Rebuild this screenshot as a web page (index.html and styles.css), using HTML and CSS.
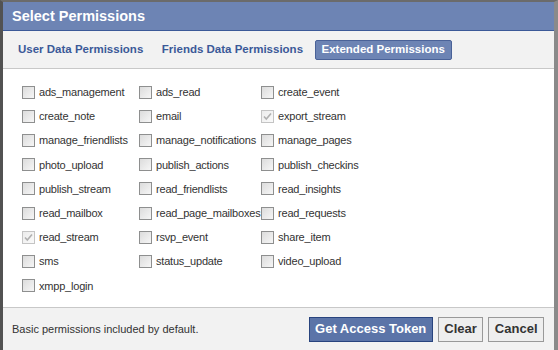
FILE: index.html
```html
<!DOCTYPE html>
<html>
<head>
<meta charset="utf-8">
<link rel="stylesheet" href="styles.css">
</head>
<body>
<div class="dialog">
  <div class="title">Select Permissions</div>
  <div class="tabs">
    <span class="tab">User Data Permissions</span>
    <span class="tab">Friends Data Permissions</span>
    <span class="tab active">Extended Permissions</span>
  </div>
  <div class="content">
    <div class="grid">
      <label class="item"><span class="cb"></span>ads_management</label>
      <label class="item"><span class="cb"></span>ads_read</label>
      <label class="item"><span class="cb"></span>create_event</label>
      <label class="item"><span class="cb"></span>create_note</label>
      <label class="item"><span class="cb"></span>email</label>
      <label class="item"><span class="cb checked"><svg viewBox="0 0 13 13" width="13" height="13"><path d="M3 6.5 L5.3 9 L10 3.5" fill="none" stroke="#b0b0b0" stroke-width="1.6"/></svg></span>export_stream</label>
      <label class="item"><span class="cb"></span>manage_friendlists</label>
      <label class="item"><span class="cb"></span>manage_notifications</label>
      <label class="item"><span class="cb"></span>manage_pages</label>
      <label class="item"><span class="cb"></span>photo_upload</label>
      <label class="item"><span class="cb"></span>publish_actions</label>
      <label class="item"><span class="cb"></span>publish_checkins</label>
      <label class="item"><span class="cb"></span>publish_stream</label>
      <label class="item"><span class="cb"></span>read_friendlists</label>
      <label class="item"><span class="cb"></span>read_insights</label>
      <label class="item"><span class="cb"></span>read_mailbox</label>
      <label class="item"><span class="cb"></span>read_page_mailboxes</label>
      <label class="item"><span class="cb"></span>read_requests</label>
      <label class="item"><span class="cb checked"><svg viewBox="0 0 13 13" width="13" height="13"><path d="M3 6.5 L5.3 9 L10 3.5" fill="none" stroke="#b0b0b0" stroke-width="1.6"/></svg></span>read_stream</label>
      <label class="item"><span class="cb"></span>rsvp_event</label>
      <label class="item"><span class="cb"></span>share_item</label>
      <label class="item"><span class="cb"></span>sms</label>
      <label class="item"><span class="cb"></span>status_update</label>
      <label class="item"><span class="cb"></span>video_upload</label>
      <label class="item"><span class="cb"></span>xmpp_login</label>
    </div>
  </div>
  <div class="footer">
    <span class="note">Basic permissions included by default.</span>
    <div class="buttons">
      <span class="btn primary">Get Access Token</span>
      <span class="btn">Clear</span>
      <span class="btn">Cancel</span>
    </div>
  </div>
</div>
</body>
</html>
```
FILE: styles.css
```css
html, body { margin: 0; padding: 0; background: #ffffff; }
body { width: 558px; height: 350px; overflow: hidden; }
.dialog {
  box-sizing: border-box;
  width: 558px;
  height: 350px;
  border-left: 3px solid #525252;
  border-top: 2px solid #6b6b6b;
  border-right: 4px solid #8a8a8a;
  display: flex;
  flex-direction: column;
  font-family: "Liberation Sans", Arial, sans-serif;
}
.title {
  height: 28px;
  background: #6d84b4;
  border-bottom: 1px solid #3b5998;
  color: #fff;
  font-weight: bold;
  font-size: 14.5px;
  line-height: 29px;
  padding-left: 9px;
}
.tabs {
  height: 37px;
  background: #f2f2f2;
  border-bottom: 1px solid #c8c8c8;
  display: flex;
  align-items: center;
  padding-left: 8px;
  gap: 4.5px;
  font-weight: bold;
  font-size: 11.5px;
}
.tab {
  color: #3b5998;
  padding: 2px 6px 3px;
  line-height: 13px;
  border: 1px solid transparent;
  border-radius: 2px;
}
.tab.active {
  background: #6d84b4;
  color: #fff;
  border-color: #4a6298;
}
.content {
  flex: 1;
  background: #fff;
  padding: 11px 0 0 19px;
  border-bottom: 1px solid #c8c8c8;
}
.grid {
  display: grid;
  grid-template-columns: 117px 122px 150px;
  grid-auto-rows: 24.2px;
  font-size: 11px;
  color: #333;
  letter-spacing: -0.2px;
}
.item {
  display: flex;
  align-items: center;
  gap: 4px;
  white-space: nowrap;
}
.cb {
  box-sizing: border-box;
  width: 13px;
  height: 13px;
  border: 1px solid #8e8f8f;
  background: linear-gradient(135deg, #dcdcdc, #f6f6f6);
  flex: none;
  display: flex;
}
.cb.checked {
  border-color: #c4c4c4;
  background: linear-gradient(135deg, #ececec, #fafafa);
}
.cb svg { margin: -1px; }
.footer {
  height: 42px;
  background: #f2f2f2;
  display: flex;
  align-items: center;
  padding-left: 9px;
  padding-right: 10px;
}
.note {
  font-size: 11px;
  color: #333;
  flex: 1;
}
.buttons { display: flex; gap: 5px; }
.btn {
  box-sizing: border-box;
  height: 25px;
  line-height: 22px;
  padding: 0 5.5px;
  border: 1px solid #999;
  background: #eeeeee;
  color: #333;
  font-weight: bold;
  font-size: 13px;
}
.btn.primary {
  background: #5b74a8;
  border-color: #29447e;
  color: #fff;
}
```
